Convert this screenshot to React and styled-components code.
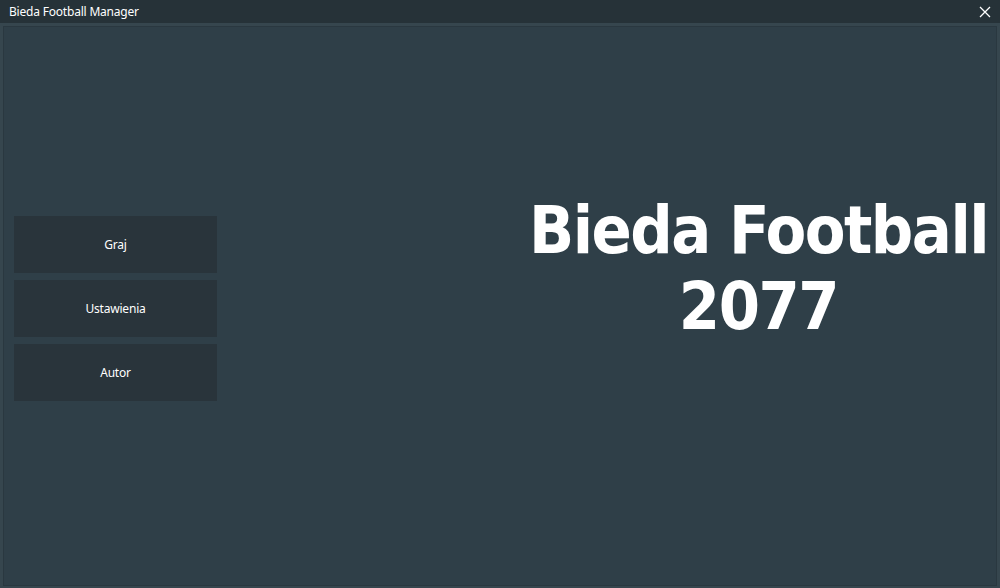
import React from 'react';
import styled, { createGlobalStyle } from 'styled-components';

const GlobalStyle = createGlobalStyle`
  html, body {
    margin: 0;
    padding: 0;
    background: #263238;
  }
  #root {
    width: 1000px;
    height: 588px;
  }
`

const menuItems = ['Graj', 'Ustawienia', 'Autor'];

const App = () => {
    return (
        <WindowDiv>
            <GlobalStyle />
            <TitleBar>
                <TitleText>Bieda Football Manager</TitleText>
                <CloseButton>
                    <svg width="12" height="12" viewBox="0 0 12 12">
                        <path d="M1 1 L11 11 M11 1 L1 11" stroke="#ffffff" strokeWidth="1.3" fill="none" />
                    </svg>
                </CloseButton>
            </TitleBar>
            <BodyFrame>
                <BodyInner>
                    <MenuColumn>
                        {menuItems.map(item => (
                            <MenuButton key={item}>{item}</MenuButton>
                        ))}
                    </MenuColumn>
                    <TitleColumn>
                        <GameTitle>Bieda Football<br />2077</GameTitle>
                    </TitleColumn>
                </BodyInner>
            </BodyFrame>
        </WindowDiv>
    )
}

const WindowDiv = styled.div`
    display: flex;
    flex-direction: column;
    width: 1000px;
    height: 588px;
    background-color: #263238;
    font-family: "Noto Sans", "Open Sans", sans-serif;
    overflow: hidden;
`
const TitleBar = styled.div`
    display: flex;
    flex-direction: row;
    align-items: center;
    justify-content: space-between;
    height: 23px;
    padding: 0px 9px 0px 9px;
    background-color: #263238;
    flex-shrink: 0;
`
const TitleText = styled.div`
    color: #ffffff;
    font-size: 12px;
    letter-spacing: -0.2px;
`
const CloseButton = styled.div`
    display: flex;
    align-items: center;
    justify-content: center;
    width: 14px;
    height: 14px;
    margin-right: -1px;
`
const BodyFrame = styled.div`
    flex: 1;
    display: flex;
    border: 3px solid #36464e;
    border-bottom-width: 2px;
    background-color: #2f3f48;
`
const BodyInner = styled.div`
    flex: 1;
    display: grid;
    grid-template-columns: 517px 1fr;
    border: 1px solid #2a3840;
`
const MenuColumn = styled.div`
    display: flex;
    flex-direction: column;
    justify-content: center;
    gap: 7px;
    padding: 4px 0px 0px 10px;
`
const MenuButton = styled.div`
    display: flex;
    align-items: center;
    justify-content: center;
    width: 203px;
    height: 57px;
    background-color: #29343b;
    color: #ffffff;
    font-size: 12px;
    letter-spacing: -0.2px;
`
const TitleColumn = styled.div`
    display: flex;
    justify-content: center;
    align-items: flex-start;
    padding-top: 166px;
`
const GameTitle = styled.div`
    color: #ffffff;
    font-family: "DejaVu Sans Condensed", "DejaVu Sans", sans-serif;
    font-stretch: condensed;
    font-weight: bold;
    font-size: 66px;
    line-height: 76px;
    letter-spacing: -1.5px;
    text-align: center;
    white-space: nowrap;
`

export default App
